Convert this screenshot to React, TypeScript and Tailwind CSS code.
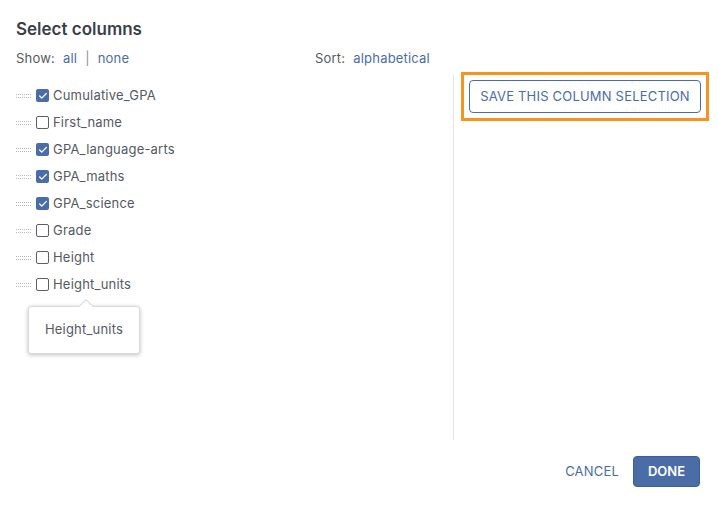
import { Check } from "lucide-react";

const columns = [
    { name: "Cumulative_GPA", checked: true },
    { name: "First_name", checked: false },
    { name: "GPA_language-arts", checked: true },
    { name: "GPA_maths", checked: true },
    { name: "GPA_science", checked: true },
    { name: "Grade", checked: false },
    { name: "Height", checked: false },
    { name: "Height_units", checked: false },
];

function DragHandle() {
    return (
        <svg width="16" height="4" viewBox="0 0 16 4" className="shrink-0">
            {[0, 2, 4, 6, 8, 10, 12, 14].map((x) => (
                <g key={x} fill="#b5b9c0">
                    <rect x={x} y={0} width={1} height={1} />
                    <rect x={x} y={3} width={1} height={1} />
                </g>
            ))}
        </svg>
    );
}

function Checkbox({ checked }: { checked: boolean }) {
    if (checked) {
        return (
            <span className="flex h-[13px] w-[13px] shrink-0 items-center justify-center rounded-[2px] bg-[#4a6da7]">
                <Check size={10} strokeWidth={3} className="text-white" />
            </span>
        );
    }
    return <span className="h-[13px] w-[13px] shrink-0 rounded-[2px] border border-[#5b5f66] bg-white" />;
}

export default function App() {
    return (
        <div className="flex h-[508px] w-[718px] flex-col bg-white font-['Inter',sans-serif] text-[#555a62]">
            {/* Header */}
            <div className="px-4 pt-[18px]">
                <h1 className="text-[17px] font-semibold leading-[22px] text-[#3a3f4a]">Select columns</h1>
            </div>

            {/* Body */}
            <div className="flex flex-1">
                <div className="relative w-[453px] pl-4">
                    <div className="mt-[9px] flex text-[13px] leading-[18px] tracking-[0.2px]">
                        <div className="w-[299px]">
                            Show:
                            <span className="ml-[8px] text-[#4a6da7]">all</span>
                            <span className="mx-[8px] text-[#8a8f96]">|</span>
                            <span className="text-[#4a6da7]">none</span>
                        </div>
                        <div>
                            Sort:
                            <span className="ml-[8px] text-[#4a6da7]">alphabetical</span>
                        </div>
                    </div>

                    <ul className="mt-[15px] flex flex-col">
                        {columns.map((c) => (
                            <li key={c.name} className="flex h-[27px] items-center gap-[4px] text-[13px] tracking-[0.2px]">
                                <DragHandle />
                                <Checkbox checked={c.checked} />
                                <span>{c.name}</span>
                            </li>
                        ))}
                    </ul>

                    {/* Tooltip */}
                    <div className="absolute left-[28px] top-[266px] flex h-[48px] w-[112px] items-center justify-center rounded-[3px] border border-[#d8dade] bg-white text-[13px] tracking-[0.2px] shadow-[0_1px_4px_rgba(0,0,0,0.25)]">
                        <span className="absolute -top-[6px] left-[52px] h-[10px] w-[10px] rotate-45 border-l border-t border-[#d8dade] bg-white" />
                        Height_units
                    </div>
                </div>

                <div className="mt-[35px] mb-[10px] flex-1 border-l border-[#e5e6e8] pl-[7px] pr-[9px]">
                    <div className="mt-[-3px] border-[3px] border-[#f7941d] p-[5px]">
                        <button className="flex h-[33px] w-full items-center justify-center rounded-[4px] border border-[#4a6da7] text-[13px] tracking-[0.2px] text-[#4a6da7]">
                            SAVE THIS COLUMN SELECTION
                        </button>
                    </div>
                </div>
            </div>

            {/* Footer */}
            <div className="flex items-center justify-end gap-[14px] pb-[21px] pr-[18px] pt-[6px]">
                <button className="text-[13px] tracking-[0.2px] text-[#4a6da7]">CANCEL</button>
                <button className="h-[31px] w-[67px] rounded-[4px] border border-[#3d5f96] bg-[#4a6da7] text-[13px] font-semibold text-white">
                    DONE
                </button>
            </div>
        </div>
    );
}
